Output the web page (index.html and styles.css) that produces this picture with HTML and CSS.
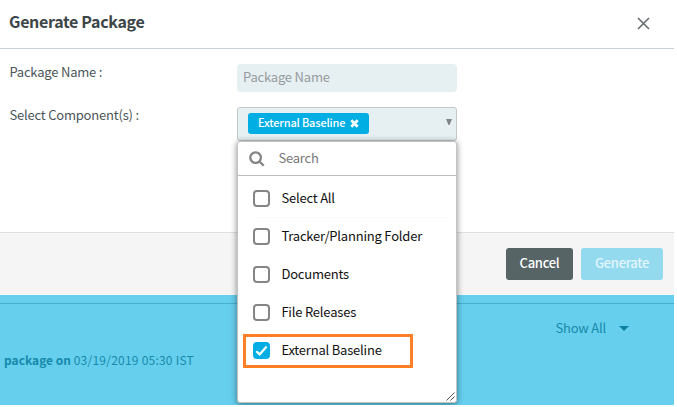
FILE: index.html
```html
<!DOCTYPE html>
<html lang="en">
<head>
<meta charset="utf-8">
<title>Generate Package</title>
<link rel="stylesheet" href="styles.css">
</head>
<body>
<div class="page">
  <section class="modal">
    <header class="modal-header">
      <h1>Generate Package</h1>
      <svg class="close" width="13" height="13" viewBox="0 0 13 13"><path d="M1 1 12 12M12 1 1 12"/></svg>
    </header>
    <div class="modal-body">
      <div class="row">
        <label class="label">Package Name :</label>
        <div class="input">Package Name</div>
      </div>
      <div class="row row-select">
        <label class="label">Select Component(s) :</label>
        <div class="select">
          <span class="chip"><span>External Baseline</span>
            <svg width="9" height="9" viewBox="0 0 9 9"><path d="M1.3 1.3 7.7 7.7M7.7 1.3 1.3 7.7"/></svg>
          </span>
          <svg class="arrow" width="6" height="6" viewBox="0 0 6 6"><path d="M0 0H6L3.5 6H2.5Z"/></svg>
          <div class="menu">
            <div class="search">
              <svg width="16" height="16" viewBox="0 0 16 16"><circle cx="6.6" cy="6.6" r="5.3"/><path d="M10.6 10.6 14.7 14.7"/></svg>
              <span>Search</span>
            </div>
            <ul class="options">
              <li class="option option-all"><i class="box"></i><span>Select All</span></li>
              <li class="option"><i class="box"></i><span>Tracker/Planning Folder</span></li>
              <li class="option"><i class="box"></i><span>Documents</span></li>
              <li class="option"><i class="box"></i><span>File Releases</span></li>
              <li class="option"><i class="box checked"><svg width="17" height="17" viewBox="0 0 17 17"><path d="M3.3 9.2 6.7 12.4 13.6 4.6"/></svg></i><span>External Baseline</span><b class="highlight"></b></li>
            </ul>
            <svg class="grip" width="9" height="9" viewBox="0 0 9 9"><path d="M.5 8.5 8.5.5M4.5 8.5 8.5 4.5"/></svg>
          </div>
        </div>
      </div>
    </div>
    <footer class="modal-footer">
      <button class="btn cancel">Cancel</button>
      <button class="btn generate">Generate</button>
    </footer>
  </section>
  <section class="backdrop">
    <div class="show-all"><span>Show All</span><svg width="10" height="5" viewBox="0 0 10 5"><path d="M0 0H10L5 5Z"/></svg></div>
    <p class="log"><strong>package on</strong> <span>03/19/2019 05:30 IST</span></p>
  </section>
</div>
</body>
</html>
```
FILE: styles.css
```css
* { box-sizing: border-box; }
body {
  margin: 0;
  background: #fff;
  color: #4b5658;
  font: 13px/20px "Noto Sans CJK SC", "Noto Sans", sans-serif;
  letter-spacing: -.2px;
  overflow: hidden;
}
.page { width: 674px; height: 405px; }
.modal-header {
  height: 49px;
  display: flex;
  justify-content: space-between;
  align-items: flex-start;
  padding: 11px 24px 0 9px;
  border-bottom: 1px solid #c5d4da;
}
h1 { margin: 0; font-size: 16px; line-height: 20px; font-weight: 700; letter-spacing: -.33px; color: #3c4548; }
.close { margin-top: 6px; fill: none; stroke: #62696b; stroke-width: 1.5; }
.modal-body { height: 183px; padding: 15px 0 0 9px; }
.row { display: flex; height: 28px; }
.row-select { margin-top: 15px; }
.label { width: 228px; padding-left: .4px; line-height: 16px; }
.input {
  width: 220px;
  height: 28px;
  padding: 0 6px;
  border-radius: 4px;
  background: #e6eff2;
  color: #969c9e;
  line-height: 26px;
}
.select {
  position: relative;
  width: 220px;
  height: 34px;
  display: flex;
  justify-content: space-between;
  padding: 5px 4px 0 10px;
  border: 1px solid #c2c8c8;
  border-radius: 3px;
  background: #e6eff2;
}
.chip {
  width: 121px;
  height: 21px;
  display: flex;
  align-items: center;
  justify-content: space-between;
  padding: 0 10px;
  border-radius: 3px;
  background: #00aee3;
  color: #fff;
  font-size: 11px;
  font-weight: 500;
}
.chip span { line-height: 18px; padding-bottom: 3px; letter-spacing: -.17px; }
.chip svg { stroke: #fff; stroke-width: 2.8; }
.arrow { margin-top: 6px; fill: #818586; }
.menu {
  position: absolute;
  z-index: 2;
  left: -1px;
  top: 33px;
  width: 220px;
  height: 262px;
  border: 1px solid #c4c4c4;
  border-radius: 3px;
  background: #fff;
  box-shadow: 0 1px 6px rgba(0, 0, 0, .48);
  color: #111;
}
.search {
  height: 34px;
  display: flex;
  align-items: center;
  gap: 13px;
  padding-left: 11px;
  border-bottom: 1px solid #bcbcbc;
  color: #777;
}
.search span { padding: 0 0 1px .4px; }
.search svg { margin-top: 1px; fill: none; stroke: #858585; stroke-width: 2.3; }
.options { list-style: none; margin: 0; padding: 4px 8px 0 15px; }
.option { position: relative; display: flex; align-items: center; height: 38px; gap: 11px; }
.option span { padding: 0 0 2px .4px; }
.option-all { box-shadow: inset 0 -1px #fafafa; }
.box { width: 17px; height: 17px; margin-bottom: 1px; border: 2px solid #858585; border-radius: 4px; }
.checked { border: 0; background: #00aee3; }
.checked svg { display: block; fill: none; stroke: #fff; stroke-width: 2.2; }
.highlight { position: absolute; left: -10px; top: 2px; width: 170px; height: 34px; border: 3px solid #ff7f27; }
.grip { position: absolute; right: 1px; bottom: 1px; fill: none; stroke: #555; stroke-width: 1; }
.modal-footer {
  height: 63px;
  display: flex;
  justify-content: flex-end;
  gap: 8px;
  padding: 15px 11px 0 0;
  border-top: 1px solid #dfdfdf;
  background: #f5f5f5;
}
.btn {
  height: 32px;
  padding: 0 0 2px;
  border: 0;
  border-radius: 3px;
  color: #fff;
  font: 500 13px/20px "Noto Sans CJK SC", "Noto Sans", sans-serif;
  letter-spacing: -.3px;
}
.cancel { width: 67px; background: #576465; }
.generate { width: 82px; background: #94daef; color: #e3f6fc; }
.backdrop { height: 110px; padding-top: 8px; background: #66cfed; color: #168aac; }
.show-all {
  height: 46px;
  display: flex;
  align-items: center;
  justify-content: flex-end;
  gap: 13px;
  padding: 2px 45px 0 0;
  border-top: 1px solid #47afce;
}
.show-all svg { fill: #0e83a5; margin-top: 2px; }
.log { margin: 0; padding: 1px 0 0 4px; font-size: 12px; line-height: 20px; letter-spacing: 0; }
.log span { letter-spacing: .23px; }
```
